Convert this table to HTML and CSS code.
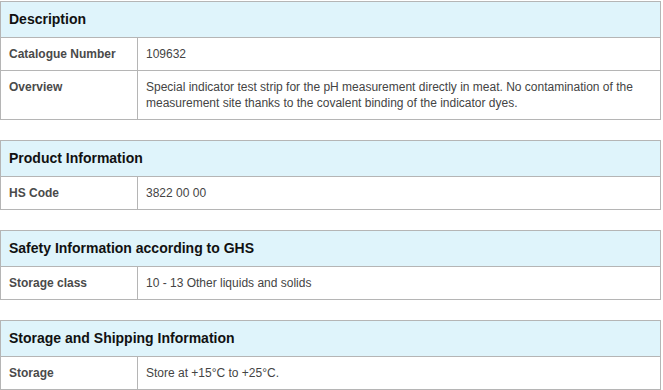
FILE: index.html
```html
<!DOCTYPE html>
<html lang="en">
<head>
<meta charset="utf-8">
<title>Product details</title>
<link rel="stylesheet" href="styles.css">
</head>
<body>
<div class="page">
  <table class="info">
    <colgroup><col class="c-label"><col></colgroup>
    <thead><tr><th colspan="2">Description</th></tr></thead>
    <tbody>
      <tr><td class="label">Catalogue Number</td><td>109632</td></tr>
      <tr><td class="label">Overview</td><td>Special indicator test strip for the pH measurement directly in meat. No contamination of the measurement site thanks to the covalent binding of the indicator dyes.</td></tr>
    </tbody>
  </table>
  <table class="info">
    <colgroup><col class="c-label"><col></colgroup>
    <thead><tr><th colspan="2">Product Information</th></tr></thead>
    <tbody>
      <tr><td class="label">HS Code</td><td>3822 00 00</td></tr>
    </tbody>
  </table>
  <table class="info">
    <colgroup><col class="c-label"><col></colgroup>
    <thead><tr><th colspan="2">Safety Information according to GHS</th></tr></thead>
    <tbody>
      <tr><td class="label">Storage class</td><td>10 - 13 Other liquids and solids</td></tr>
    </tbody>
  </table>
  <table class="info">
    <colgroup><col class="c-label"><col></colgroup>
    <thead><tr><th colspan="2">Storage and Shipping Information</th></tr></thead>
    <tbody>
      <tr><td class="label">Storage</td><td>Store at +15°C to +25°C.</td></tr>
    </tbody>
  </table>
</div>
</body>
</html>
```
FILE: styles.css
```css
html, body {
  margin: 0;
  padding: 0;
  background: #ffffff;
}
body {
  font-family: "Liberation Sans", Arial, sans-serif;
  font-size: 12px;
  color: #444444;
}
.page {
  padding-top: 1px;
  display: flex;
  flex-direction: column;
  gap: 20px;
  width: 661px;
}
.info {
  width: 661px;
  border-collapse: collapse;
  table-layout: fixed;
  border: 1px solid #b5b5b5;
}
.c-label {
  width: 137px;
}
.info th {
  background: #dff4fb;
  color: #111111;
  font-weight: bold;
  font-size: 14px;
  line-height: 19px;
  text-align: left;
  padding: 8px 8px 8px 8px;
  border: 1px solid #b5b5b5;
}
.info td {
  border: 1px solid #b5b5b5;
  padding: 8px 8px;
  line-height: 16px;
  vertical-align: top;
  color: #444444;
}
.info td.label {
  font-weight: bold;
  color: #4a4a4a;
}
```
